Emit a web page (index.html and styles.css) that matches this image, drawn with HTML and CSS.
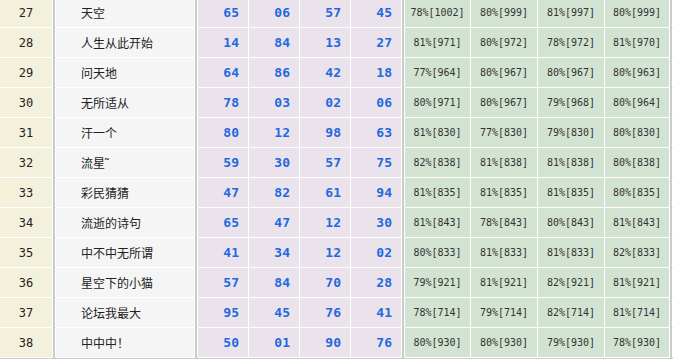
FILE: index.html
```html
<!DOCTYPE html>
<html lang="zh">
<head>
<meta charset="utf-8">
<title>统计</title>
<link rel="stylesheet" href="styles.css">
</head>
<body>
<table class="stats">
<colgroup>
<col class="c-num"><col class="c-sep"><col class="c-name"><col class="c-sep">
<col class="c-b"><col class="c-b"><col class="c-b"><col class="c-b"><col class="c-sep">
<col class="c-p1"><col class="c-p2"><col class="c-p2"><col class="c-p3"><col class="c-sep">
</colgroup>
<tbody>
<tr><td class="num">27</td><td class="sep"></td><td class="name">天空</td><td class="sep"></td><td class="ball">65</td><td class="ball">06</td><td class="ball">57</td><td class="ball">45</td><td class="sep"></td><td class="pct">78%[1002]</td><td class="pct">80%[999]</td><td class="pct">81%[997]</td><td class="pct">80%[999]</td><td class="sep"></td></tr>
<tr><td class="num">28</td><td class="sep"></td><td class="name">人生从此开始</td><td class="sep"></td><td class="ball">14</td><td class="ball">84</td><td class="ball">13</td><td class="ball">27</td><td class="sep"></td><td class="pct">81%[971]</td><td class="pct">80%[972]</td><td class="pct">78%[972]</td><td class="pct">81%[970]</td><td class="sep"></td></tr>
<tr><td class="num">29</td><td class="sep"></td><td class="name">问天地</td><td class="sep"></td><td class="ball">64</td><td class="ball">86</td><td class="ball">42</td><td class="ball">18</td><td class="sep"></td><td class="pct">77%[964]</td><td class="pct">80%[967]</td><td class="pct">80%[967]</td><td class="pct">80%[963]</td><td class="sep"></td></tr>
<tr><td class="num">30</td><td class="sep"></td><td class="name">无所适从</td><td class="sep"></td><td class="ball">78</td><td class="ball">03</td><td class="ball">02</td><td class="ball">06</td><td class="sep"></td><td class="pct">80%[971]</td><td class="pct">80%[967]</td><td class="pct">79%[968]</td><td class="pct">80%[964]</td><td class="sep"></td></tr>
<tr><td class="num">31</td><td class="sep"></td><td class="name">汗一个</td><td class="sep"></td><td class="ball">80</td><td class="ball">12</td><td class="ball">98</td><td class="ball">63</td><td class="sep"></td><td class="pct">81%[830]</td><td class="pct">77%[830]</td><td class="pct">79%[830]</td><td class="pct">80%[830]</td><td class="sep"></td></tr>
<tr><td class="num">32</td><td class="sep"></td><td class="name">流星˜</td><td class="sep"></td><td class="ball">59</td><td class="ball">30</td><td class="ball">57</td><td class="ball">75</td><td class="sep"></td><td class="pct">82%[838]</td><td class="pct">81%[838]</td><td class="pct">81%[838]</td><td class="pct">80%[838]</td><td class="sep"></td></tr>
<tr><td class="num">33</td><td class="sep"></td><td class="name">彩民猜猜</td><td class="sep"></td><td class="ball">47</td><td class="ball">82</td><td class="ball">61</td><td class="ball">94</td><td class="sep"></td><td class="pct">81%[835]</td><td class="pct">81%[835]</td><td class="pct">81%[835]</td><td class="pct">80%[835]</td><td class="sep"></td></tr>
<tr><td class="num">34</td><td class="sep"></td><td class="name">流逝的诗句</td><td class="sep"></td><td class="ball">65</td><td class="ball">47</td><td class="ball">12</td><td class="ball">30</td><td class="sep"></td><td class="pct">81%[843]</td><td class="pct">78%[843]</td><td class="pct">80%[843]</td><td class="pct">81%[843]</td><td class="sep"></td></tr>
<tr><td class="num">35</td><td class="sep"></td><td class="name">中不中无所谓</td><td class="sep"></td><td class="ball">41</td><td class="ball">34</td><td class="ball">12</td><td class="ball">02</td><td class="sep"></td><td class="pct">80%[833]</td><td class="pct">81%[833]</td><td class="pct">81%[833]</td><td class="pct">82%[833]</td><td class="sep"></td></tr>
<tr><td class="num">36</td><td class="sep"></td><td class="name">星空下的小猫</td><td class="sep"></td><td class="ball">57</td><td class="ball">84</td><td class="ball">70</td><td class="ball">28</td><td class="sep"></td><td class="pct">79%[921]</td><td class="pct">81%[921]</td><td class="pct">82%[921]</td><td class="pct">81%[921]</td><td class="sep"></td></tr>
<tr><td class="num">37</td><td class="sep"></td><td class="name">论坛我最大</td><td class="sep"></td><td class="ball">95</td><td class="ball">45</td><td class="ball">76</td><td class="ball">41</td><td class="sep"></td><td class="pct">78%[714]</td><td class="pct">79%[714]</td><td class="pct">82%[714]</td><td class="pct">81%[714]</td><td class="sep"></td></tr>
<tr><td class="num">38</td><td class="sep"></td><td class="name">中中中！</td><td class="sep"></td><td class="ball">50</td><td class="ball">01</td><td class="ball">90</td><td class="ball">76</td><td class="sep"></td><td class="pct">80%[930]</td><td class="pct">80%[930]</td><td class="pct">79%[930]</td><td class="pct">78%[930]</td><td class="sep"></td></tr>
</tbody>
</table>
</body>
</html>
```
FILE: styles.css
```css
html, body {
  margin: 0;
  padding: 0;
  background: #ffffff;
}
body {
  overflow: hidden;
}
.stats {
  margin-top: -2px;
  border-collapse: separate;
  border-spacing: 0;
  table-layout: fixed;
  width: 673px;
  border-bottom: 1px solid #cccccc;
}
.c-num { width: 53px; }
.c-sep { width: 3px; }
.c-name { width: 139px; }
.c-b { width: 51px; }
.c-p1 { width: 66px; }
.c-p2 { width: 67px; }
.c-p3 { width: 65px; }

.stats td {
  height: 29px;
  padding: 0;
  border-right: 1px solid #ffffff;
  border-bottom: 1px solid #ffffff;
  white-space: nowrap;
  overflow: hidden;
}
.stats td.sep {
  background: #cccccc;
  border-bottom-color: #cccccc;
  border-right: 1px solid #ffffff;
}
.num {
  background: #f3f1dc;
  text-align: center;
  font-family: "DejaVu Sans Mono", monospace;
  font-size: 12px;
  color: #222222;
}
.name {
  background: #f5f5f5;
  padding-left: 25px !important;
  font-family: "Noto Sans CJK SC", sans-serif;
  font-size: 12px;
  color: #222222;
}
.ball {
  background: #ebe3eb;
  text-align: right;
  padding-right: 9px !important;
  font-family: "DejaVu Sans Mono", monospace;
  font-weight: bold;
  font-size: 13px;
  color: #2468e0;
}
.pct {
  background: #d2e3d1;
  text-align: center;
  font-family: "DejaVu Sans Mono", monospace;
  font-size: 10px;
  color: #333333;
}
```
